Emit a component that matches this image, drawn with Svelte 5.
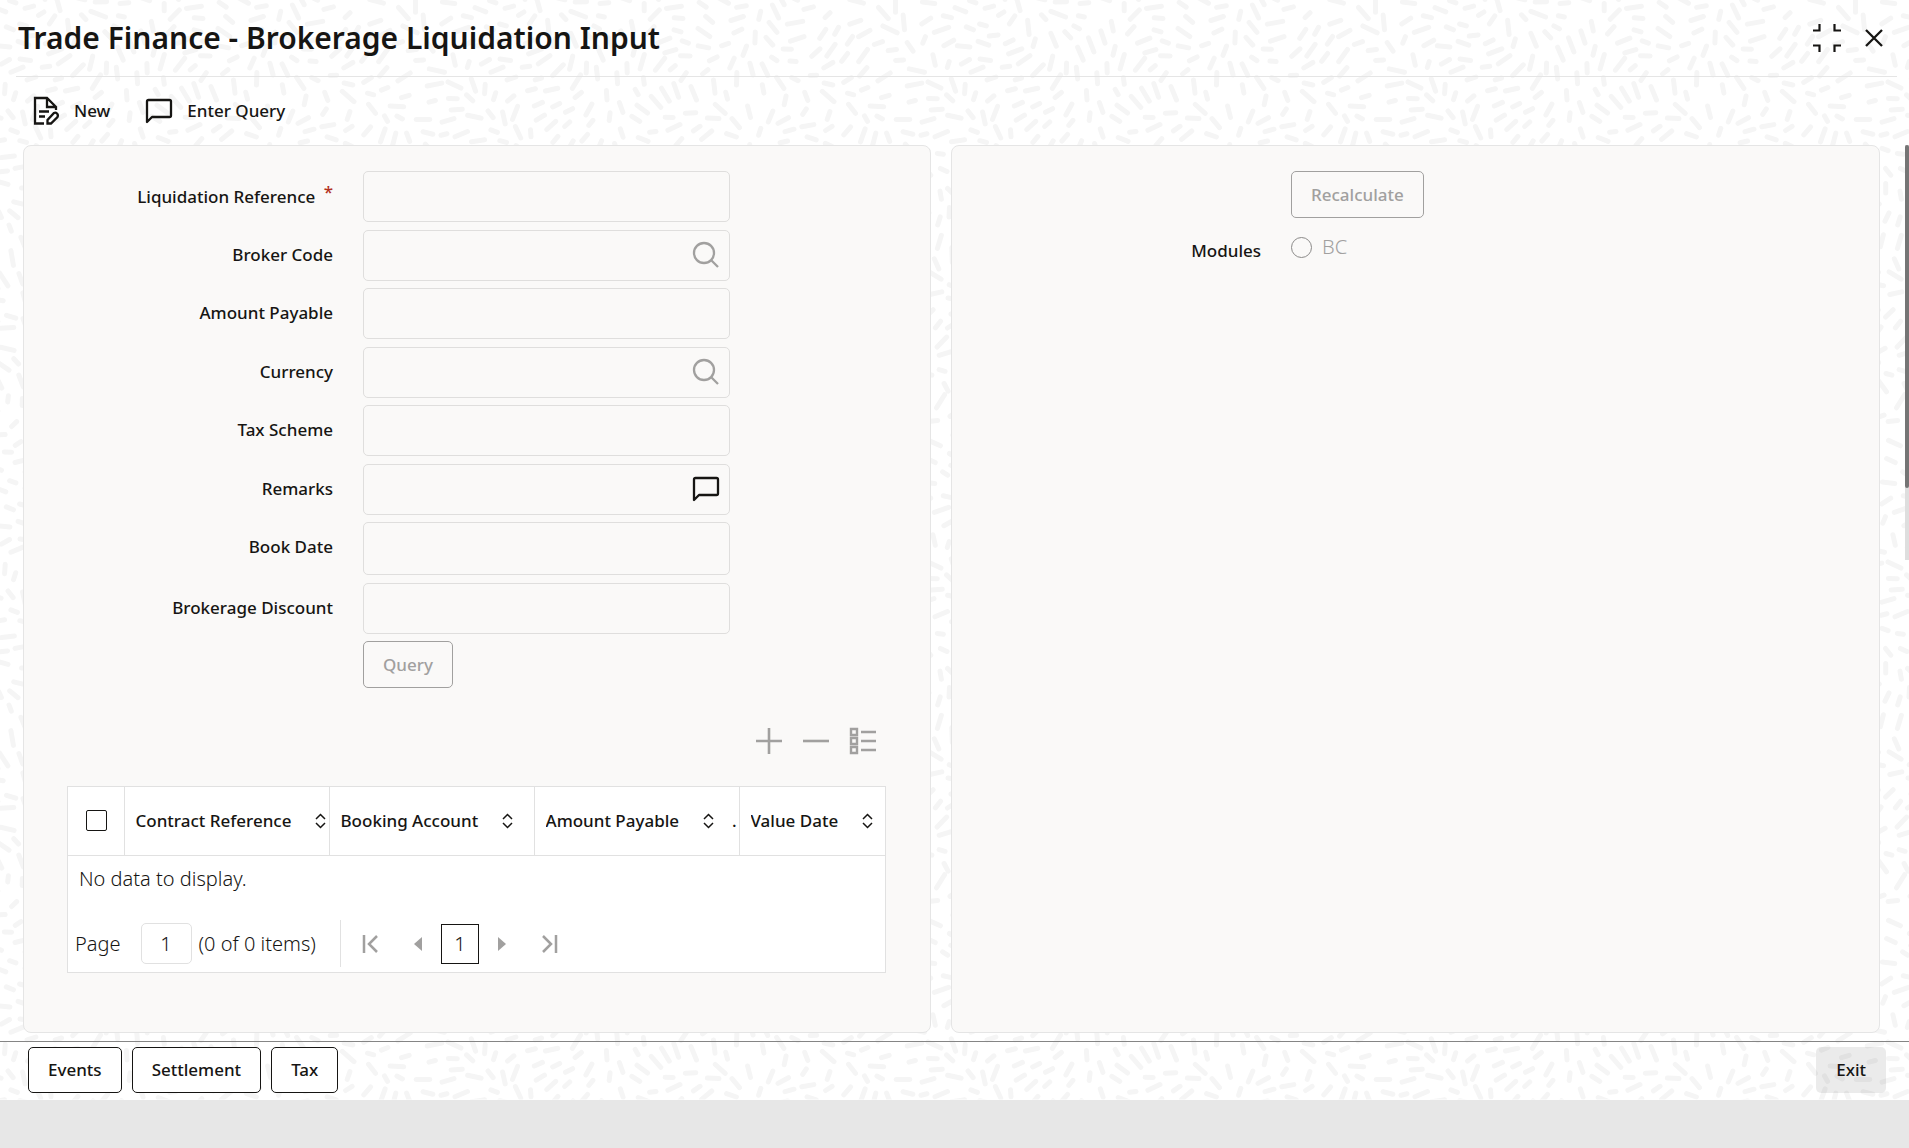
<script>
  const fields = [
    { id: 'liquidation-reference', label: 'Liquidation Reference', kind: 'text', required: true },
    { id: 'broker-code', label: 'Broker Code', kind: 'lookup' },
    { id: 'amount-payable', label: 'Amount Payable', kind: 'text' },
    { id: 'currency', label: 'Currency', kind: 'lookup' },
    { id: 'tax-scheme', label: 'Tax Scheme', kind: 'text' },
    { id: 'remarks', label: 'Remarks', kind: 'note' },
    { id: 'book-date', label: 'Book Date', kind: 'date' },
    { id: 'brokerage-discount', label: 'Brokerage Discount', kind: 'number' },
  ];

  const columns = [
    { title: 'Contract Reference' },
    { title: 'Booking Account' },
    { title: 'Amount Payable', more: true },
    { title: 'Value Date' },
  ];

  const footerButtons = ['Events', 'Settlement', 'Tax'];

  // Background texture: short round strokes that follow a periodic flow field
  const tile = 480;
  const texture = buildTexture();

  function wrap(value) {
    return value - tile * Math.round(value / tile);
  }

  function buildTexture() {
    let seed = 11;
    const random = () => {
      seed = (seed * 16807) % 2147483647;
      return seed / 2147483647;
    };
    const turn = (Math.PI * 2) / tile;
    const strokes = [];
    for (let i = 0; i < 16000; i++) {
      const x = random() * tile;
      const y = random() * tile;
      const angle =
        1.2 * Math.sin(turn * 2 * x + 2 * Math.cos(turn * y)) +
        1.2 * Math.cos(turn * 2 * y - 2 * Math.sin(turn * x)) +
        (random() - 0.5) * 0.3 + 1.4;
      const cos = Math.cos(angle);
      const sin = Math.sin(angle);
      const half = 3 + random() * 5;
      const crowded = strokes.some((s) => {
        const dx = wrap(x - s.x);
        const dy = wrap(y - s.y);
        const along = (dx * cos + dy * sin) / (half + s.half + 8);
        const across = (dy * cos - dx * sin) / 11;
        return along * along + across * across < 1;
      });
      if (!crowded) strokes.push({ x, y, cos, sin, half });
    }

    let d = '';
    for (const { x, y, cos, sin, half } of strokes) {
      const dx = cos * half;
      const dy = sin * half;
      // repeat each stroke past the tile edges so that the seams stay closed
      for (const ox of [-tile, 0, tile]) {
        for (const oy of [-tile, 0, tile]) {
          const px = x + ox;
          const py = y + oy;
          if (px < -12 || py < -12 || px > tile + 12 || py > tile + 12) continue;
          d += `M${(px - dx).toFixed(1)} ${(py - dy).toFixed(1)}l${(dx * 2).toFixed(1)} ${(dy * 2).toFixed(1)}`;
        }
      }
    }
    return d;
  }
</script>

{#snippet commentIcon()}
  <svg width="28" height="28" viewBox="0 0 28 28" fill="none" stroke="currentColor" stroke-width="2.3" stroke-linejoin="round">
    <path d="M2 25V4.500Q2 3 3.500 3H24.500Q26 3 26 4.500V18.500Q26 20 24.500 20H7L2 25Z" />
  </svg>
{/snippet}

<div class="window">
  <svg class="texture" aria-hidden="true">
    <defs>
      <pattern id="strokes" width={tile} height={tile} patternUnits="userSpaceOnUse">
        <path d={texture} fill="none" stroke="#f5f5f5" stroke-width="5" stroke-linecap="round" />
      </pattern>
    </defs>
    <rect width="100%" height="100%" fill="url(#strokes)" />
  </svg>

  <header class="title-bar">
    <h1>Trade Finance - Brokerage Liquidation Input</h1>
    <div class="window-controls">
      <button type="button" class="icon-button" aria-label="Restore">
        <svg width="30" height="30" viewBox="0 0 30 30" fill="none" stroke="currentColor" stroke-width="2.2">
          <path d="M1 7.500H7.500V1M22.500 1V7.500H29M1 22.500H7.500V29M22.500 29V22.500H29" />
        </svg>
      </button>
      <button type="button" class="icon-button" aria-label="Close">
        <svg width="18" height="18" viewBox="0 0 18 18" fill="none" stroke="currentColor" stroke-width="2.3">
          <path d="M1 1L17 17M17 1L1 17" />
        </svg>
      </button>
    </div>
  </header>

  <div class="actions">
    <button type="button" class="action">
      <svg width="28" height="30" viewBox="0 0 28 30" fill="none" stroke="currentColor" stroke-width="2.3">
        <path d="M12 27.500H3V2H15L24 11V14M15 2V11H24M7 15.500H17M7 20.500H13" />
        <path d="M15.500 27.500V24L22 17Q23.500 16 25 17.500T25.500 21L19 27.500Z" />
      </svg>
      New
    </button>
    <button type="button" class="action">
      {@render commentIcon()}
      Enter Query
    </button>
  </div>

  <main class="content">
    <section class="panel">
      <div class="form">
        {#each fields as field}
          <div class="row {field.kind}">
            <label for={field.id}>
              {field.label}
              {#if field.required}<span class="required">*</span>{/if}
            </label>
            <div class="control">
              <input id={field.id} type="text" disabled />
              {#if field.kind === 'lookup'}
                <button type="button" class="icon-button inside muted" aria-label="Search {field.label}" disabled>
                  <svg width="28" height="28" viewBox="0 0 28 28" fill="none" stroke="currentColor" stroke-width="2.3">
                    <circle cx="12" cy="12" r="10" />
                    <path d="M19 19L26 26" />
                  </svg>
                </button>
              {:else if field.kind === 'note'}
                <button type="button" class="icon-button inside" aria-label="Open remarks">
                  {@render commentIcon()}
                </button>
              {/if}
            </div>
          </div>
        {/each}
        <div class="row">
          <span></span>
          <div><button type="button" class="button" disabled>Query</button></div>
        </div>
      </div>

      <div class="grid">
        <div class="grid-tools">
          <button type="button" class="icon-button muted" aria-label="Add row" disabled>
            <svg width="28" height="28" viewBox="0 0 28 28" fill="none" stroke="currentColor" stroke-width="2.6">
              <path d="M14 1V27M1 14H27" />
            </svg>
          </button>
          <button type="button" class="icon-button muted" aria-label="Remove row" disabled>
            <svg width="28" height="28" viewBox="0 0 28 28" fill="none" stroke="currentColor" stroke-width="2.6">
              <path d="M1 14H27" />
            </svg>
          </button>
          <button type="button" class="icon-button muted" aria-label="Single record view" disabled>
            <svg width="28" height="28" viewBox="0 0 28 28" fill="none" stroke="currentColor" stroke-width="2.4">
              <path d="M2 2H8V8H2ZM2 11H8V17H2ZM2 20H8V26H2ZM12 5H27M12 14H27M12 23H27" />
            </svg>
          </button>
        </div>

        <div class="table-box">
          <table>
            <thead>
              <tr>
                <th class="select"><input type="checkbox" aria-label="Select all rows" /></th>
                {#each columns as column}
                  <th>
                    <div class="heading">
                      <span>{column.title}</span>
                      <svg width="11" height="16" viewBox="0 0 11 16" fill="none" stroke="currentColor" stroke-width="1.500">
                        <path d="M1 6L5.500 1.500L10 6M1 10L5.500 14.500L10 10" />
                      </svg>
                      {#if column.more}<span class="more">.</span>{/if}
                    </div>
                  </th>
                {/each}
              </tr>
            </thead>
            <tbody>
              <tr><td colspan="5">No data to display.</td></tr>
            </tbody>
          </table>

          <nav class="pager" aria-label="Pages">
            <label for="page">Page</label>
            <input id="page" type="text" value="1" />
            <span class="count">(0 of 0 items)</span>
            <div class="pages">
              <button type="button" class="icon-button muted" aria-label="First page" disabled>
                <svg width="17" height="18" viewBox="0 0 17 18" fill="none" stroke="currentColor" stroke-width="2.5">
                  <path d="M2 0V18M15 1L7 9L15 17" />
                </svg>
              </button>
              <button type="button" class="icon-button muted" aria-label="Previous page" disabled>
                <svg width="8" height="14" viewBox="0 0 8 14" fill="currentColor"><path d="M8 0V14L0 7Z" /></svg>
              </button>
              <button type="button" class="current">1</button>
              <button type="button" class="icon-button muted" aria-label="Next page" disabled>
                <svg width="8" height="14" viewBox="0 0 8 14" fill="currentColor"><path d="M0 0V14L8 7Z" /></svg>
              </button>
              <button type="button" class="icon-button muted" aria-label="Last page" disabled>
                <svg width="17" height="18" viewBox="0 0 17 18" fill="none" stroke="currentColor" stroke-width="2.5">
                  <path d="M15 0V18M2 1L10 9L2 17" />
                </svg>
              </button>
            </div>
          </nav>
        </div>
      </div>
    </section>

    <section class="panel">
      <div class="form">
        <div class="row">
          <span></span>
          <div><button type="button" class="button" disabled>Recalculate</button></div>
        </div>
        <div class="row modules">
          <span class="caption" id="modules">Modules</span>
          <div role="radiogroup" aria-labelledby="modules">
            <label class="radio"><input type="radio" name="module" value="BC" disabled />BC</label>
          </div>
        </div>
      </div>
    </section>

    <div class="scrollbar"><div class="thumb"></div></div>
  </main>

  <footer>
    {#each footerButtons as name}
      <button type="button" class="button solid">{name}</button>
    {/each}
    <button type="button" class="button exit">Exit</button>
  </footer>
</div>

<style>
  :global(body) {
    background: #e7e7e7;
  }

  .window {
    position: relative;
    isolation: isolate;
    background: #fff;
    color: #161513;
    font-family: 'Noto Sans', 'Open Sans', sans-serif;
    font-size: 17px;
    font-weight: 500;
    line-height: 24px;
  }

  .texture {
    position: absolute;
    inset: 0;
    z-index: -1;
    width: 100%;
    height: 100%;
  }

  button,
  input {
    font: inherit;
    color: inherit;
    box-sizing: border-box;
    margin: 0;
  }

  svg {
    display: block;
    flex: none;
  }

  .title-bar {
    display: flex;
    align-items: center;
    justify-content: space-between;
    height: 76px;
    margin: 0 12px 0 16px;
    padding: 0 14px 0 2px;
    border-bottom: 1px solid #e5e5e5;
  }

  h1 {
    margin: 0;
    font-size: 30px;
    font-weight: 600;
    line-height: 40px;
  }

  .window-controls {
    display: flex;
    align-items: center;
    gap: 23px;
  }

  .icon-button {
    display: flex;
    padding: 0;
    border: 0;
    background: none;
  }

  .muted {
    color: #a1a09f;
  }

  .actions {
    display: flex;
    align-items: center;
    gap: 35px;
    height: 68px;
    padding: 0 32px;
  }

  .action {
    display: flex;
    align-items: center;
    gap: 14px;
    padding: 0;
    border: 0;
    background: none;
  }

  .content {
    position: relative;
    display: grid;
    grid-template-columns: 908fr 929fr;
    gap: 20px;
    padding: 0 29px 8px 23px;
  }

  .panel {
    box-sizing: border-box;
    min-width: 0;
    padding: 25px 0 59px;
    border: 1px solid #e5e5e5;
    border-radius: 8px;
    background: #faf9f8;
  }

  .form {
    display: flex;
    flex-direction: column;
    gap: 7px;
  }

  .row {
    display: grid;
    grid-template-columns: 309px minmax(0, 367px);
    column-gap: 30px;
    align-items: start;
  }

  .row.text {
    min-height: 52px;
  }

  .row.date {
    min-height: 54px;
  }

  .row > label,
  .caption {
    padding-top: 13px;
    text-align: right;
  }

  .required {
    margin-left: 4px;
    color: #b3311f;
    font-size: 17px;
    line-height: 16px;
    vertical-align: 5px;
  }

  .control {
    position: relative;
  }

  .control input {
    display: block;
    width: 100%;
    height: 51px;
    padding: 0 16px;
    border: 1px solid #dfdedd;
    border-radius: 5px;
    background: #faf9f8;
  }

  .date .control input {
    height: 53px;
  }

  .inside {
    position: absolute;
    top: 11px;
    right: 10px;
  }

  .button {
    height: 47px;
    padding: 0 19px;
    border: 1px solid #a1a09f;
    border-radius: 5px;
    background: #faf9f8;
    color: #161513;
  }

  .button:disabled {
    color: #a1a09f;
  }

  .modules {
    margin-top: 6px;
  }

  .modules .caption {
    padding-top: 8px;
  }

  .radio {
    display: flex;
    align-items: center;
    gap: 10px;
    height: 32px;
    color: #a1a09f;
    font-size: 20px;
    font-weight: 350;
  }

  .radio input {
    appearance: none;
    width: 21px;
    height: 21px;
    border: 1px solid #8b8a89;
    border-radius: 50%;
  }

  .grid {
    margin: 39px 44px 0 43px;
  }

  .grid-tools {
    display: flex;
    justify-content: flex-end;
    gap: 19px;
    padding: 0 9px 31px 0;
  }

  .table-box {
    border: 1px solid #e1e1e1;
    background: #fff;
  }

  table {
    width: 100%;
    table-layout: fixed;
    border-collapse: collapse;
  }

  th {
    box-sizing: border-box;
    width: 205px;
    height: 68px;
    padding: 0 0 0 11px;
    border-right: 1px solid #e1e1e1;
    border-bottom: 1px solid #e1e1e1;
    font-weight: 500;
    text-align: left;
  }

  th:last-child {
    width: auto;
    border-right: 0;
  }

  .select {
    width: 56px;
    padding: 0 0 0 18px;
  }

  .select input {
    display: block;
    appearance: none;
    width: 21px;
    height: 21px;
    border: 1px solid #161513;
    border-radius: 2px;
  }

  .heading {
    display: flex;
    align-items: center;
    gap: 24px;
    overflow: hidden;
    white-space: nowrap;
  }

  .more {
    margin-left: -6px;
  }

  td {
    padding: 9px 11px 10px;
    font-size: 20px;
    font-weight: 350;
    line-height: 28px;
  }

  .pager {
    display: flex;
    align-items: center;
    height: 48px;
    padding: 17px 7px 4px;
    font-size: 20px;
    font-weight: 350;
  }

  .pager input {
    width: 51px;
    height: 41px;
    margin: 0 7px 0 20px;
    border: 1px solid #e1e1e1;
    border-radius: 5px;
    text-align: center;
  }

  .pages {
    display: flex;
    align-items: center;
    gap: 19px;
    height: 47px;
    margin-left: 24px;
    padding-left: 21px;
    border-left: 1px solid #e1e1e1;
  }

  .pages .icon-button:first-child {
    margin-right: 16px;
  }

  .pages .icon-button:last-child {
    margin-left: 16px;
  }

  .current {
    width: 38px;
    height: 40px;
    padding: 0;
    border: 1px solid #161513;
    background: #fff;
  }

  .scrollbar {
    position: absolute;
    top: 0;
    right: 0;
    width: 4px;
    height: 415px;
    background: #dedede;
  }

  .thumb {
    height: 343px;
    border-radius: 4px;
    background: #757575;
  }

  footer {
    display: flex;
    gap: 10px;
    padding: 5px 23px 7px 28px;
    border-top: 1px solid #858585;
  }

  footer .button {
    height: 46px;
  }

  .solid {
    border-color: #161513;
    background: #fff;
  }

  .exit {
    margin-left: auto;
    border-color: transparent;
    background: rgba(0, 0, 0, 0.08);
  }
</style>
